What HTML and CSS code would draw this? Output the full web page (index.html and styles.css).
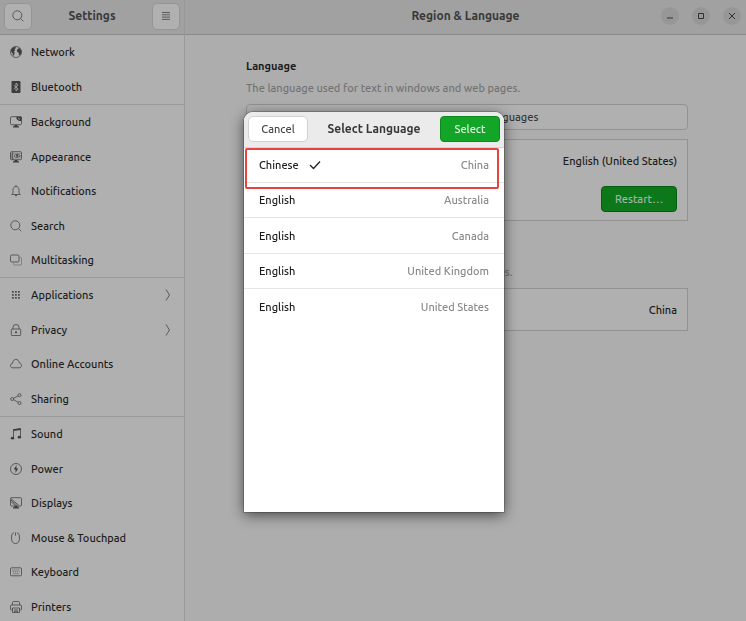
FILE: index.html
```html
<!DOCTYPE html>
<html lang="en">
<head>
<meta charset="utf-8">
<meta name="viewport" content="width=device-width, initial-scale=1">
<title>Settings</title>
<link rel="stylesheet" href="styles.css">
</head>
<body>
<div class="window">
  <aside class="sidebar">
    <header class="bar bar-side">
      <button class="tool" type="button" aria-label="Search">
        <svg viewBox="0 0 12 12"><circle cx="5.3" cy="5.3" r="4.5"/><path d="M8.5 8.5l2.8 2.8"/></svg>
      </button>
      <h1 class="title">Settings</h1>
      <button class="tool" type="button" aria-label="Menu">
        <svg viewBox="0 0 12 12"><path d="M2 2.500h8M2 4.800h8M2 7.100h8M2 9.400h8"/></svg>
      </button>
    </header>
    <nav class="nav">
      <div class="group">
        <a class="item" href="#"><svg viewBox="0 0 12 12"><circle cx="6" cy="6" r="5.500"/><path class="solid" d="M1 3.500L3.200 1.300 5.800 1 5.500 2.600 4.500 3.400 5.300 4.500 3.800 5.200 4.700 6.600 4 9 3 10 2.600 7.200 1 5.500zM7.500 3.200L9.300 1.800 11.200 4.200 11.400 7 10 9.200 8.800 9 8.900 6.900 7.300 6.100 6.800 4.500z"/></svg>Network</a>
        <a class="item" href="#"><svg viewBox="0 0 12 12"><rect class="solid" x="1.500" y="0" width="9" height="12" rx="1"/><path class="light" d="M3.700 4l4.500 4L6 10V2l2.200 2-4.500 4"/></svg>Bluetooth</a>
      </div>
      <div class="group">
        <a class="item" href="#"><svg viewBox="0 0 12 12"><rect x=".5" y=".7" width="11" height="8" rx="1"/><path class="solid" d="M6.500.7H11.500V5H9L6.500 3zM4.500 9h3v1.300H9v1.200H3v-1.200h1.500z"/><path class="light" d="M8 2l2 1.500"/></svg>Background</a>
        <a class="item" href="#"><svg viewBox="0 0 12 12"><rect x=".5" y=".7" width="11" height="8" rx="1"/><path d="M2.700 1v8M.5 3h2M.5 5h2M.5 7h2M4 4.800Q7 1.500 10.500 4.800 7 8 4 4.800"/><circle class="solid" cx="7.200" cy="4.700" r="1.100"/><path d="M3 2.400h8M3 7h8" opacity=".4"/><path class="solid" d="M4.500 9h3v1.300H9v1.200H3v-1.200h1.500z"/></svg>Appearance</a>
        <a class="item" href="#"><svg viewBox="0 0 12 12"><path d="M1.800 9.500C3 8.500 3 7.500 3 5.200 3 2.800 4.200 1.500 6 1.500s3 1.300 3 3.700c0 2.300 0 3.300 1.200 4.300zM6 .2v1.200"/><path class="solid" d="M4.800 10h2.400L6 11.400z"/></svg>Notifications</a>
        <a class="item" href="#"><svg viewBox="0 0 12 12"><circle cx="5.300" cy="5.300" r="4.500"/><path d="M8.600 8.600l2.700 2.700"/></svg>Search</a>
        <a class="item" href="#"><svg viewBox="0 0 12 12"><rect x=".5" y="1" width="8.500" height="7" rx="1.200"/><path opacity=".5" d="M10 3.500h.5q1 0 1 1v5.500q0 1-1 1H4.500q-1 0-1-1V9.300"/></svg>Multitasking</a>
      </div>
      <div class="group">
        <a class="item" href="#"><svg viewBox="0 0 12 12"><path class="solid" opacity=".85" d="M2 2h1.800v1.800H2zM5 2h1.800v1.800H5zM8 2h1.800v1.800H8zM2 5h1.800v1.800H2zM5 5h1.800v1.800H5zM8 5h1.800v1.800H8zM2 8h1.800v1.800H2zM5 8h1.800v1.800H5zM8 8h1.800v1.800H8z"/></svg>Applications<svg class="arrow" viewBox="0 0 6 12"><path d="M1 .5L4.500 6 1 11.500"/></svg></a>
        <a class="item" href="#"><svg viewBox="0 0 12 12"><rect x="1.300" y="5" width="9.400" height="6.500" rx=".8"/><path d="M3 5V3.300Q3 .5 6 .5t3 2.800V5"/><circle class="solid" cx="6" cy="8.300" r="1"/></svg>Privacy<svg class="arrow" viewBox="0 0 6 12"><path d="M1 .5L4.500 6 1 11.500"/></svg></a>
        <a class="item" href="#"><svg viewBox="0 0 12 12"><path d="M2.800 9.800C-.2 9.800-.3 5.700 2.500 5.500 2.800.2 8.700.2 9.200 4.800c3 .3 3 5 0 5z"/></svg>Online Accounts</a>
        <a class="item" href="#"><svg viewBox="0 0 12 12"><circle cx="2.200" cy="6" r="1.500"/><circle cx="9.500" cy="2.200" r="1.500"/><circle cx="9.500" cy="10" r="1.500"/><path d="M3.600 5.300l4.500-2.400M3.600 6.700l4.500 2.500"/></svg>Sharing</a>
      </div>
      <div class="group">
        <a class="item" href="#"><svg viewBox="0 0 12 12"><path d="M3.500 10V1.700l7-1V9"/><path class="solid" d="M3.200 1.200l7.600-1v1.800l-7.600 1z"/><ellipse class="solid" cx="2.500" cy="10.200" rx="1.700" ry="1.400"/><ellipse class="solid" cx="9.400" cy="9.200" rx="1.700" ry="1.400"/></svg>Sound</a>
        <a class="item" href="#"><svg viewBox="0 0 12 12"><circle cx="6" cy="6" r="5.500"/><path class="solid" d="M6.600 2L3.700 6.500h1.900L5.400 10 8.300 5.500H6.400z"/></svg>Power</a>
        <a class="item" href="#"><svg viewBox="0 0 12 12"><rect x=".5" y=".7" width="11" height="8.300" rx="1"/><path d="M.8 1.500L9 8.500M.8 4.500L5.500 8.700M1 3l6 5.500"/><path class="solid" d="M4.500 9h3v1.300H9v1.200H3v-1.200h1.500z"/></svg>Displays</a>
        <a class="item" href="#"><svg viewBox="0 0 12 12"><path d="M4 .8C2 1.200 1.500 3 1.500 6c0 3.500 1.300 5.500 4 5.500s4-2 4-5.500c0-3-.5-4.800-2.500-5.200M5.500.5v3.200"/></svg>Mouse &amp; Touchpad</a>
        <a class="item" href="#"><svg viewBox="0 0 12 12"><rect x=".5" y="1.800" width="11" height="8" rx="1"/><path class="keys" d="M2.300 4h7.400M2.900 5.800h6.500M3.500 7.700h5"/></svg>Keyboard</a>
        <a class="item" href="#"><svg viewBox="0 0 12 12"><path d="M2.500 4V1.500q0-1 1-1h5q1 0 1 1V4M2.500 9H1.500q-1 0-1-1V5q0-1 1-1h9q1 0 1 1v3q0 1-1 1h-1M2.500 7h7v4.500h-7z"/><path d="M4 9h4M4 10.300h4"/></svg>Printers</a>
      </div>
    </nav>
  </aside>

  <main class="main">
    <header class="bar bar-main">
      <h2 class="title">Region &amp; Language</h2>
      <div class="controls">
        <button class="control" type="button" aria-label="Minimize"><svg viewBox="0 0 8 8"><path d="M1 6h6"/></svg></button>
        <button class="control" type="button" aria-label="Maximize"><svg viewBox="0 0 8 8"><path d="M1.500 1.500h5v5h-5z"/></svg></button>
        <button class="control" type="button" aria-label="Close"><svg viewBox="0 0 8 8"><path d="M1 1l6 6M7 1L1 7"/></svg></button>
      </div>
    </header>
    <div class="content">
      <section class="section">
        <h3 class="heading">Language</h3>
        <p class="hint">The language used for text in windows and web pages.</p>
        <button class="manage" type="button">Manage Installed Languages</button>
        <div class="card">
          <span class="value">English (United States)</span>
          <button class="primary restart" type="button">Restart…</button>
        </div>
      </section>
      <section class="section">
        <p class="hint">The formats used for numbers, dates, and currencies.</p>
        <div class="card">
          <span class="value">China</span>
        </div>
      </section>
    </div>
  </main>
</div>

<div class="overlay">
  <section class="dialog" role="dialog" aria-labelledby="dialog-title">
    <header class="dialog-bar">
      <button class="cancel" type="button">Cancel</button>
      <h2 class="title" id="dialog-title">Select Language</h2>
      <button class="primary select" type="button">Select</button>
    </header>
    <ul class="languages">
      <li class="language"><span>Chinese</span><svg class="check" viewBox="0 0 12 10"><path d="M1 5l3.500 3.500L11 1.500"/></svg><span class="country">China</span></li>
      <li class="language"><span>English</span><span class="country">Australia</span></li>
      <li class="language"><span>English</span><span class="country">Canada</span></li>
      <li class="language"><span>English</span><span class="country">United Kingdom</span></li>
      <li class="language"><span>English</span><span class="country">United States</span></li>
    </ul>
    <div class="marker"></div>
  </section>
</div>
</body>
</html>
```
FILE: styles.css
```css
* { box-sizing: border-box; }

body {
  margin: 0;
  font: 500 11px/16px Ubuntu, "Noto Sans", sans-serif;
  color: #1c1c1c;
  background: #adadad;
}

h1, h2, h3, p, ul { margin: 0; padding: 0; }
button { font: inherit; color: inherit; padding: 0; }
svg { display: block; fill: none; stroke: #444; stroke-width: .8; }
.solid { fill: #3c3c3c; stroke: none; }
.light { stroke: #b0b0b0; }
.keys { stroke-dasharray: 1 1; }

.window {
  display: grid;
  grid-template-columns: 185px 1fr;
  height: 100vh;
  overflow: hidden;
}

.bar {
  display: flex;
  align-items: center;
  height: 35px;
  padding: 0 4px 2px;
  background: #a1a1a1;
  border-bottom: 1px solid #8a8a8a;
}
.bar-side { justify-content: space-between; }
.title { font-size: 12px; line-height: 16px; font-weight: 700; color: #383838; }

.tool {
  display: grid;
  place-items: center;
  width: 28px;
  height: 27px;
  background: #b0b0b0;
  border: 1px solid #959595;
  border-radius: 5px;
}
.tool svg { width: 12px; height: 12px; }

.sidebar { background: #b0b0b0; border-right: 1px solid #989898; }
.group { display: grid; grid-auto-rows: 34px 35px; border-bottom: 1px solid #9a9a9a; }
.item {
  display: flex;
  align-items: center;
  gap: 9px;
  padding: 0 13px 0 10px;
  color: inherit;
  text-decoration: none;
}
.item svg { flex: none; width: 12px; height: 12px; }
.item .arrow { width: 6px; margin-left: auto; }

.bar-main {
  display: grid;
  grid-template-columns: 1fr auto 1fr;
  padding: 0 5px 2px;
}
.bar-main .title { grid-column: 2; }
.controls { display: flex; justify-content: flex-end; gap: 13px; }
.control {
  display: grid;
  place-items: center;
  width: 18px;
  height: 18px;
  background: #979797;
  border: 0;
  border-radius: 50%;
}
.control svg { width: 8px; height: 8px; stroke: #303030; stroke-width: 1; }

.content {
  display: grid;
  gap: 37px;
  padding: 23px 58px 0 61px;
}
.section { display: flex; flex-direction: column; }
.heading { font-size: 11px; line-height: 16px; font-weight: 700; }
.hint { margin: 6px 0 8px; color: #737373; }
.manage {
  height: 26px;
  margin-bottom: 9px;
  background: #b0b0b0;
  border: 1px solid #929292;
  border-radius: 4px;
  color: #383838;
}
.card {
  display: flex;
  flex-direction: column;
  align-items: flex-end;
  gap: 17px;
  padding: 13px 10px 8px;
  min-height: 43px;
  background: #b0b0b0;
  border: 1px solid #929292;
}

.primary { height: 26px; border-radius: 4px; }
.restart { width: 76px; background: #0c7819; border: 1px solid #075d10; color: #a3b5a5; }

.overlay {
  position: fixed;
  inset: 0;
  display: grid;
  place-items: center;
  padding: 3px 0 0 2px;
}
.dialog {
  position: relative;
  width: 260px;
  height: 400px;
  background: #fff;
  border-radius: 9px 9px 0 0;
  box-shadow: 0 0 0 1px rgba(0, 0, 0, .2), 0 3px 14px rgba(0, 0, 0, .6);
}
.dialog-bar {
  display: flex;
  align-items: center;
  justify-content: space-between;
  height: 36px;
  padding: 0 4px 2px;
  background: #ebebeb;
  border-bottom: 1px solid #d5d5d5;
  border-radius: 9px 9px 0 0;
}
.cancel {
  width: 60px;
  height: 26px;
  background: #fff;
  border: 1px solid #d0d0d0;
  border-radius: 5px;
  color: #484848;
}
.select { width: 60px; background: #12a528; border: 1px solid #0c8a1d; color: #e4f5e6; }

.languages { display: grid; grid-auto-rows: 35px 35px 36px; list-style: none; }
.language {
  display: flex;
  align-items: center;
  gap: 10px;
  padding: 0 15px;
  border-bottom: 1px solid #e6e6e6;
}
.language:last-child { border-bottom: 0; }
.country { margin-left: auto; color: #8a8a8a; }
.check { width: 12px; height: 10px; stroke: #222; stroke-width: 1.3; }

.marker {
  position: absolute;
  top: 36px;
  left: 1px;
  right: 5px;
  height: 41px;
  border: 2px solid #e5453d;
  border-radius: 2px;
}
```
